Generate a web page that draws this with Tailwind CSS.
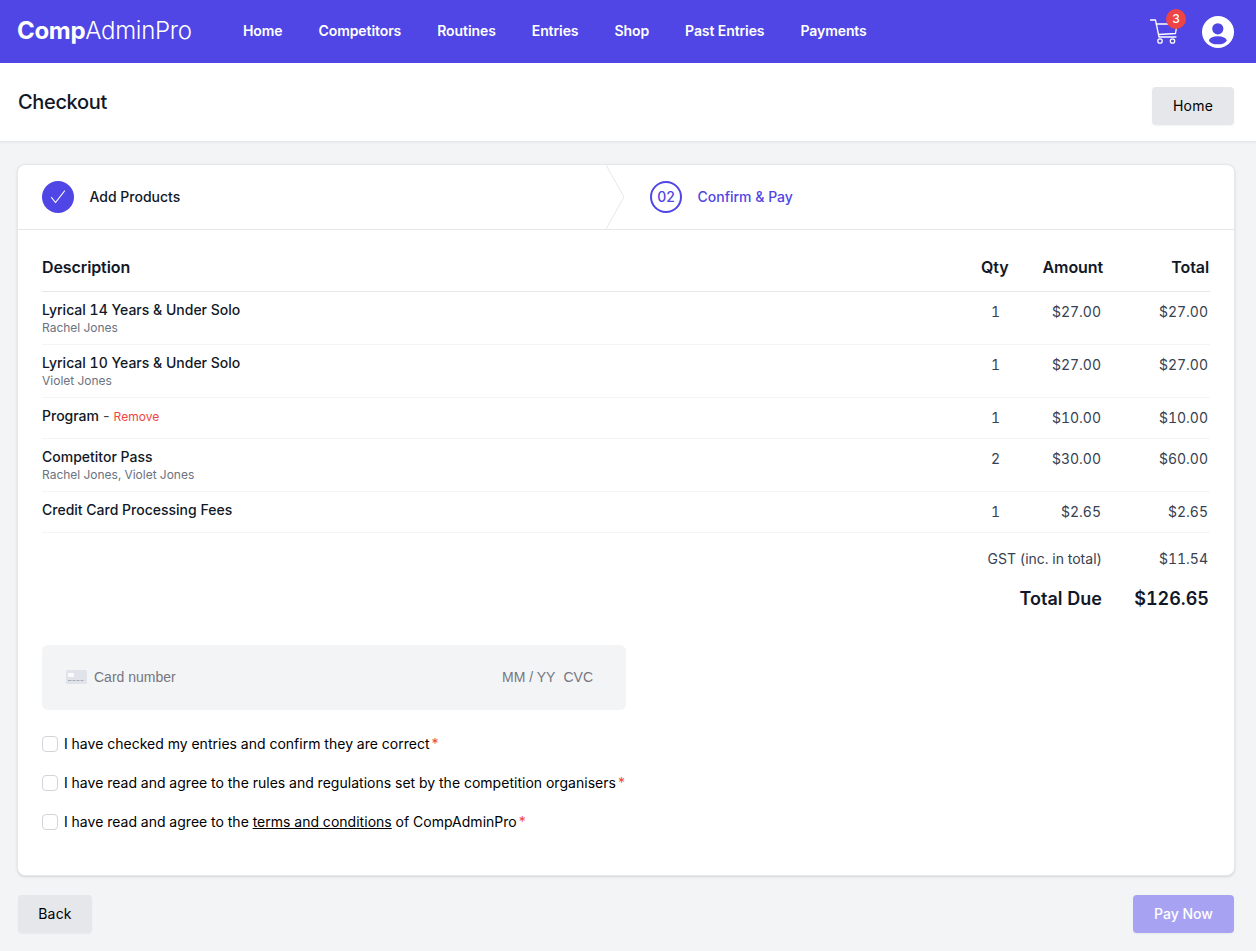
<!DOCTYPE html>
<html lang="en">
<head>
<meta charset="utf-8">
<title>Checkout</title>
<script src="https://cdn.jsdelivr.net/npm/@tailwindcss/browser@4"></script>
</head>
<body class="bg-[#f3f4f6] font-[Inter,sans-serif] text-[#111827] h-[951px] overflow-hidden">
<nav class="h-[63px] bg-[#4f46e5] flex items-center pl-[18px] pr-[22px] text-white">
  <div class="text-2xl w-[225px] tracking-[-0.3px] -mt-px -ml-px"><span class="font-bold">Comp</span><span class="font-light">AdminPro</span></div>
  <div class="flex gap-9 text-sm font-semibold tracking-[-0.085px] -mt-[2px] ml-px">
    <a>Home</a><a>Competitors</a><a>Routines</a><a>Entries</a><a>Shop</a><a>Past Entries</a><a>Payments</a>
  </div>
  <div class="ml-auto flex items-center gap-4">
    <div class="relative w-[36px] h-[32px]">
      <svg class="absolute left-0 top-[2px]" width="30" height="28" viewBox="0 0 30 28" fill="none" stroke="white" stroke-width="1.3" stroke-linecap="round" stroke-linejoin="round">
        <path d="M0.5 2h5l3.5 17h17"/><path d="M6.3 6H27l-1.5 9.5-17 1"/><circle cx="10" cy="23" r="2.2"/><circle cx="22.5" cy="23" r="2.2"/>
      </svg>
      <span class="absolute left-[16px] top-[-7px] w-5 h-5 rounded-full bg-[#ef4444] text-xs flex items-center justify-center font-medium">3</span>
    </div>
    <svg width="32" height="32" viewBox="0 0 32 32"><circle cx="16" cy="16" r="16" fill="white"/><circle cx="15.8" cy="12.8" r="5.6" fill="#4f46e5"/><ellipse cx="15.8" cy="24.3" rx="8.8" ry="4" fill="#4f46e5"/></svg>
  </div>
</nav>
<header class="h-[79px] bg-white border-b border-[#e5e7eb] flex items-center justify-between pl-[18px] pr-[22px] shadow-xs">
  <h1 class="text-xl font-medium tracking-[-0.35px]">Checkout</h1>
  <button class="w-[82px] h-[38px] mt-[7px] bg-[#e5e7eb] rounded text-sm font-normal tracking-[0.2px] text-black shadow-xs">Home</button>
</header>
<main class="px-[18px] pr-[22px] pt-[22px]">
  <section class="h-[712px] bg-white rounded-lg border border-[#e5e7eb] shadow-sm -ml-px -mr-px">
    <div class="relative h-[65px] border-b border-[#e5e7eb] flex items-center">
      <div class="w-[589px] flex items-center pl-6 gap-[15.5px] text-sm font-medium">
        <span class="w-8 h-8 rounded-full bg-[#4f46e5] flex items-center justify-center">
          <svg width="18" height="18" viewBox="0 0 18 18" fill="none" stroke="white" stroke-width="1.2" stroke-linecap="round" stroke-linejoin="round"><path d="M2.5 9.5l4 5L15.5 3"/></svg>
        </span>
        Add Products
      </div>
      <svg class="absolute left-[588px] top-0" width="20" height="64" viewBox="0 0 20 64" fill="none" stroke="#e5e7eb"><path d="M0 0l18 32L0 64"/></svg>
      <div class="flex items-center pl-[43px] gap-[15.5px] text-sm font-medium text-[#4f46e5]">
        <span class="w-8 h-8 rounded-full border-2 border-[#4f46e5] flex items-center justify-center">02</span>
        Confirm &amp; Pay
      </div>
    </div>
    <div class="px-6 pt-[24px] tabular-nums">
      <div class="h-[38px] pt-[1px] border-b border-[#e5e7eb] flex font-semibold text-base tracking-[-0.1px]">
        <div class="flex-1">Description</div>
        <div class="w-[67px] text-left pl-[38px]">Qty</div>
        <div class="w-[94px] text-right pr-px">Amount</div>
        <div class="w-[106px] text-right pr-px">Total</div>
      </div>
      <div class="h-[53px] border-b border-[#f3f4f6] flex pt-[9px] text-sm">
        <div class="flex-1"><div class="font-medium leading-[17px]">Lyrical 14 Years &amp; Under Solo</div><div class="text-xs text-[#6b7280] leading-[18px] mt-px">Rachel Jones</div></div>
        <div class="w-[67px] pl-[48px] pt-[1px] text-[#374151]">1</div><div class="w-[92px] pt-[1px] pr-px text-right text-[#374151]">$27.00</div><div class="w-[108px] pt-[1px] text-right pr-[2px] text-[#374151]">$27.00</div>
      </div>
      <div class="h-[53px] border-b border-[#f3f4f6] flex pt-[9px] text-sm">
        <div class="flex-1"><div class="font-medium leading-[17px]">Lyrical 10 Years &amp; Under Solo</div><div class="text-xs text-[#6b7280] leading-[18px] mt-px">Violet Jones</div></div>
        <div class="w-[67px] pl-[48px] pt-[1px] text-[#374151]">1</div><div class="w-[92px] pt-[1px] pr-px text-right text-[#374151]">$27.00</div><div class="w-[108px] pt-[1px] text-right pr-[2px] text-[#374151]">$27.00</div>
      </div>
      <div class="h-[41px] border-b border-[#f3f4f6] flex pt-[9px] text-sm">
        <div class="flex-1 leading-[17px]"><span class="font-medium">Program</span> <span class="text-[#374151] -ml-px">-</span> <span class="text-xs text-[#ef4444] -ml-[1px]">Remove</span></div>
        <div class="w-[67px] pl-[48px] pt-[1px] text-[#374151]">1</div><div class="w-[92px] pt-[1px] pr-px text-right text-[#374151]">$10.00</div><div class="w-[108px] pt-[1px] text-right pr-[2px] text-[#374151]">$10.00</div>
      </div>
      <div class="h-[53px] border-b border-[#f3f4f6] flex pt-[9px] text-sm">
        <div class="flex-1"><div class="font-medium leading-[17px]">Competitor Pass</div><div class="text-xs text-[#6b7280] leading-[18px] mt-px">Rachel Jones, Violet Jones</div></div>
        <div class="w-[67px] pl-[48px] pt-[1px] text-[#374151]">2</div><div class="w-[92px] pt-[1px] pr-px text-right text-[#374151]">$30.00</div><div class="w-[108px] pt-[1px] text-right pr-[2px] text-[#374151]">$60.00</div>
      </div>
      <div class="h-[41px] border-b border-[#f3f4f6] flex pt-[9px] text-sm">
        <div class="flex-1 font-medium leading-[17px]">Credit Card Processing Fees</div>
        <div class="w-[67px] pl-[48px] pt-[1px] text-[#374151]">1</div><div class="w-[92px] pt-[1px] pr-px text-right text-[#374151]">$2.65</div><div class="w-[108px] pt-[1px] text-right pr-[2px] text-[#374151]">$2.65</div>
      </div>
      <div class="flex justify-end h-[52px] pt-[16px] text-sm text-[#374151]">
        <div class="text-right pr-px">GST (inc. in total)</div><div class="w-[107px] text-right pr-[2px]">$11.54</div>
      </div>
      <div class="flex justify-end h-[60px] text-lg font-semibold">
        <div class="text-right">Total Due</div><div class="w-[108px] text-right pr-px">$126.65</div>
      </div>
      <div class="w-[584px] h-[65px] bg-[#f3f4f6] rounded-md flex items-center pl-6 pr-[33px] pb-[2px] text-sm text-[#757680] font-['Liberation_Sans',sans-serif]">
        <svg class="mr-[7px]" width="21" height="14" viewBox="0 0 21 14"><rect width="21" height="14" rx="1.5" fill="#e1e3ea"/><rect x="2" y="3" width="6" height="4" fill="#fafafc"/><path d="M2 10.5h3.5M6.5 10.5h3M10.5 10.5h3M14.5 10.5h3" stroke="#a9adb9"/></svg>
        <span>Card number</span>
        <span class="ml-auto">MM / YY</span>
        <span class="ml-[8px]">CVC</span>
      </div>
      <div class="mt-[26px] flex flex-col gap-[23px] text-sm text-black tracking-[0.025px]">
        <label class="flex items-center h-4 gap-[6px]"><span class="w-4 h-4 rounded border border-[#d1d5db] bg-white shrink-0"></span><span>I have checked my entries and confirm they are correct<span class="text-[#ef4444] ml-px">*</span></span></label>
        <label class="flex items-center h-4 gap-[6px]"><span class="w-4 h-4 rounded border border-[#d1d5db] bg-white shrink-0"></span><span>I have read and agree to the rules and regulations set by the competition organisers<span class="text-[#ef4444] ml-px">*</span></span></label>
        <label class="flex items-center h-4 gap-[6px]"><span class="w-4 h-4 rounded border border-[#d1d5db] bg-white shrink-0"></span><span>I have read and agree to the <u>terms and conditions</u> of CompAdminPro<span class="text-[#ef4444] ml-px">*</span></span></label>
      </div>
    </div>
  </section>
  <div class="flex justify-between mt-[19px]">
    <button class="w-[74px] h-[38px] bg-[#e5e7eb] rounded text-sm font-normal tracking-[0.2px] text-black shadow-xs">Back</button>
    <button class="w-[101px] h-[38px] bg-[#a7a3f2] rounded text-sm font-medium text-white shadow-xs">Pay Now</button>
  </div>
</main>
</body>
</html>
